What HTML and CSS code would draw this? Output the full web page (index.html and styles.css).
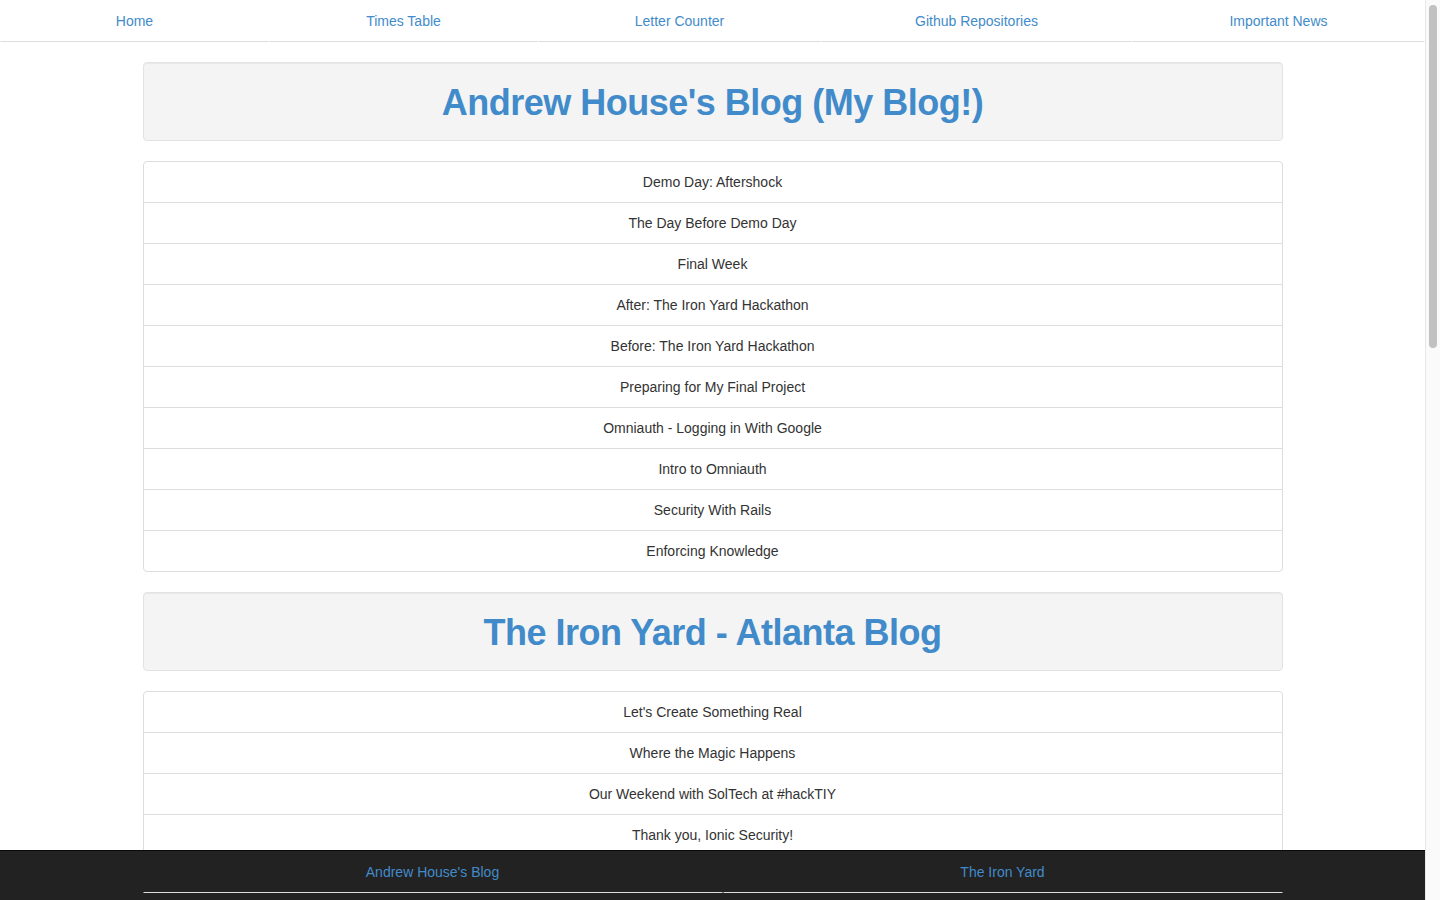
FILE: index.html
```html
<!DOCTYPE html>
<html lang="en">
<head>
<meta charset="utf-8">
<title>Blogs</title>
<link rel="stylesheet" href="styles.css">
</head>
<body>
<div class="page">
  <ul class="topnav">
    <li><a href="#">Home</a></li>
    <li><a href="#">Times Table</a></li>
    <li><a href="#">Letter Counter</a></li>
    <li><a href="#">Github Repositories</a></li>
    <li><a href="#">Important News</a></li>
  </ul>

  <main class="container">
    <div class="well"><h1>Andrew House's Blog (My Blog!)</h1></div>
    <ul class="list-group">
      <li class="item">Demo Day: Aftershock</li>
      <li class="item">The Day Before Demo Day</li>
      <li class="item">Final Week</li>
      <li class="item">After: The Iron Yard Hackathon</li>
      <li class="item">Before: The Iron Yard Hackathon</li>
      <li class="item">Preparing for My Final Project</li>
      <li class="item">Omniauth - Logging in With Google</li>
      <li class="item">Intro to Omniauth</li>
      <li class="item">Security With Rails</li>
      <li class="item">Enforcing Knowledge</li>
    </ul>

    <div class="well"><h1>The Iron Yard - Atlanta Blog</h1></div>
    <ul class="list-group">
      <li class="item">Let's Create Something Real</li>
      <li class="item">Where the Magic Happens</li>
      <li class="item">Our Weekend with SolTech at #hackTIY</li>
      <li class="item">Thank you, Ionic Security!</li>
      <li class="item">Behind the Scenes at The Iron Yard</li>
    </ul>
  </main>

  <footer class="footer">
    <ul class="footnav">
      <li><a href="#">Andrew House's Blog</a></li>
      <li><a href="#">The Iron Yard</a></li>
    </ul>
  </footer>
</div>
<div class="scrollbar"><div class="thumb"></div></div>
</body>
</html>
```

FILE: styles.css
```css
html {
  overflow: hidden;
  height: 100%;
}
body {
  margin: 0;
  height: 100%;
  font-family: "Liberation Sans", Arial, sans-serif;
  font-size: 14px;
  line-height: 20px;
  color: #333;
  background: #fff;
}
.page {
  width: 1425px;
  height: 100%;
  overflow: hidden;
  position: relative;
}
a {
  color: #428bca;
  text-decoration: none;
}
.topnav {
  list-style: none;
  margin: 0;
  padding: 0;
  display: grid;
  grid-template-columns: 269fr 269fr 283fr 311fr 293fr;
}
.topnav a,
.footnav a {
  display: block;
  text-align: center;
  padding: 10px 15px;
  border: 1px solid transparent;
  border-bottom-color: #ddd;
}
.container {
  width: 1140px;
  margin: 20px auto 0;
}
.well {
  background: #f4f4f4;
  border: 1px solid #e3e3e3;
  border-radius: 4px;
  box-shadow: inset 0 1px 1px rgba(0,0,0,.05);
  padding: 20px 19px 18px;
  margin-bottom: 20px;
}
.well h1 {
  margin: 0;
  text-align: center;
  font-size: 36px;
  line-height: 39px;
  font-weight: bold;
  letter-spacing: -0.5px;
  color: #428bca;
}
.list-group {
  list-style: none;
  margin: 0 0 20px;
  padding: 0;
}
.item {
  text-align: center;
  padding: 10px 15px;
  border: 1px solid #ddd;
  margin-bottom: -1px;
  background: #fff;
}
.item:first-child {
  border-radius: 4px 4px 0 0;
}
.item:last-child {
  border-radius: 0 0 4px 4px;
  margin-bottom: 0;
}
.footer {
  position: absolute;
  left: 0;
  right: 0;
  bottom: 0;
  height: 49px;
  background: #222;
  border-top: 1px solid #080808;
}
.footnav {
  list-style: none;
  width: 1140px;
  margin: 0 auto;
  padding: 0;
  display: grid;
  grid-template-columns: 580fr 560fr;
}
.scrollbar {
  position: fixed;
  top: 0;
  right: 0;
  width: 14px;
  height: 100%;
  background: #fafafa;
  border-left: 1px solid #e8e8e8;
}
.thumb {
  margin: 5px 0 0 3px;
  width: 8px;
  height: 343px;
  border-radius: 4px;
  background: #c1c1c1;
}
```
